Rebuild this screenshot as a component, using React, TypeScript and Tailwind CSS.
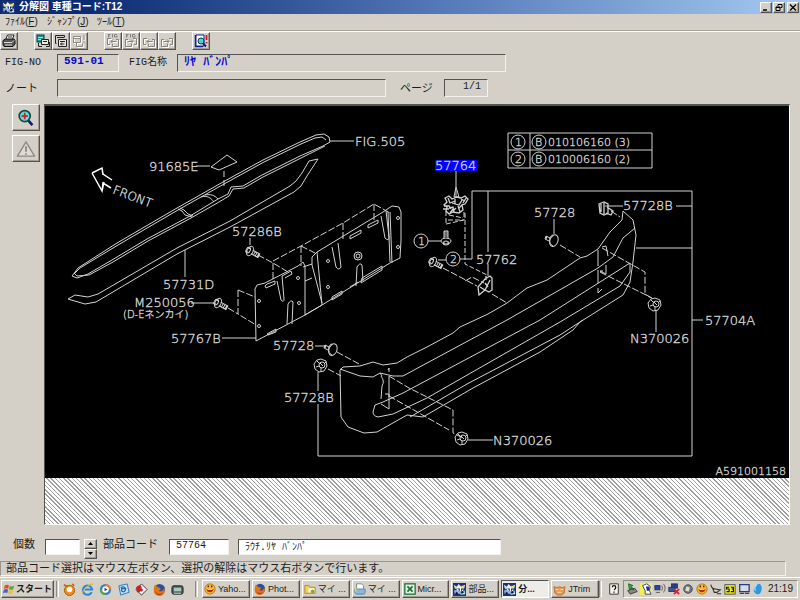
import type { ReactNode } from "react";

const ui = "font-['Liberation_Sans','Noto_Sans_CJK_JP',sans-serif]";
const mono = "font-['Liberation_Mono','Noto_Sans_CJK_JP',monospace]";
const raised =
  "border border-t-white border-l-white border-r-[#55534e] border-b-[#55534e] shadow-[inset_-1px_-1px_0_#a09c94]";
const sunken = "border border-t-[#6b6862] border-l-[#6b6862] border-r-[#f4f2ee] border-b-[#f4f2ee]";
const fieldBox = "border border-t-[#55534e] border-l-[#55534e] border-r-[#f4f2ee] border-b-[#f4f2ee] outline-none";

function Icon({ size = 14, children }: { size?: number; children: ReactNode }) {
  return (
    <svg width={size} height={size} viewBox="0 0 14 14" className="shrink-0" aria-hidden="true">
      {children}
    </svg>
  );
}

function CatalogIcon({ size = 12 }: { size?: number }) {
  return (
    <Icon size={size}>
      <rect width="14" height="14" fill="#1c2f78" />
      <path d="M1 2l3 2 2-3 3 3 4-2-1 4H2z" fill="#e9edf2" />
      <path d="M2 4h2v2H2zM9 3h3v2H9z" fill="#f0e23c" />
      <path d="M1 8l4-1 3 2 5-1v4l-4 1-3-2-4 1z" fill="#7fb3d8" />
      <path d="M4 6l2 2M8 5v4M11 7l-2 3M3 10l3 1M10 11h3" stroke="#fff" strokeWidth="1.2" />
      <circle cx="4" cy="11" r="1.3" fill="#101840" />
      <circle cx="10" cy="10" r="1.3" fill="#101840" />
    </Icon>
  );
}

/* ---------- toolbar ---------- */

function ToolButton({ label, disabled, children }: { label: string; disabled?: boolean; children: ReactNode }) {
  return (
    <button
      type="button"
      aria-label={label}
      disabled={disabled}
      className={`${raised} flex h-[18px] w-[18px] items-center justify-center bg-[#d4d0c8]`}
    >
      {children}
    </button>
  );
}

function PrinterIcon() {
  return (
    <Icon>
      <path d="M4 5l1.500-4H12l-1.500 4" fill="#fff" stroke="#222" />
      <path d="M1 6.500L3.500 5H12l1 1.500V10l-2 2.500H2L1 11z" fill="#555" stroke="#111" />
      <path d="M2 8.500h8l2-2M3 11h7" stroke="#ddd" fill="none" />
      <path d="M6 3h4" stroke="#222" />
    </Icon>
  );
}

function PagesIcon({ tone, kind }: { tone: string; kind: "teal" | "swap" | "jump" }) {
  return (
    <Icon>
      {kind === "teal" && (
        <>
          <rect x="1" y="1" width="7" height="7" fill="#1f9a90" stroke="#083c3c" />
          <path d="M2 3.500h5M2 5.500h3" stroke="#7ff0e0" />
          <path d="M5.500 5.500h7v5h-7z" fill="#ece9e2" stroke={tone} />
          <path d="M2.500 9v3.500H6M10 12.500h3.500V8M7 7.500h4" stroke={tone} fill="none" />
        </>
      )}
      {kind === "swap" && (
        <>
          <path d="M2.500 9.500h-1v-8h9v2" fill="none" stroke={tone} />
          <path d="M3 3.500h7" stroke={tone} />
          <path d="M4.500 5.500h8v7h-8z" fill="#ece9e2" stroke={tone} />
          <path d="M6 7.500h5M6.500 10h4M8 8.500L6.500 10 8 11.500" stroke={tone} fill="none" />
        </>
      )}
      {kind === "jump" && (
        <>
          <g stroke="#fff" fill="none" transform="translate(1 1)">
            <path d="M1.500 2.500h7v6h-7zM4.500 8.500v4h6v-3M12 1v5" />
          </g>
          <path d="M1.500 2.500h7v6h-7zM2 4.500h6M4.500 8.500v4h6v-3M12 1v5M12 7.500V9" fill="none" stroke={tone} />
        </>
      )}
    </Icon>
  );
}

function FigIcon({ back, fig }: { back: boolean; fig: boolean }) {
  const outline = back
    ? "M5 4.500H1.500v6H4M6.500 12.500h6v-7H10M6.500 12.500V10"
    : "M9 4.500h3.500v6H10M7.500 12.500h-6v-7H4M7.500 12.500V10";
  const arrow = back ? "M5 7.500h5.500M7 5.500l-2 2 2 2" : "M3.500 7.500H9M7 5.500l2 2-2 2";
  return (
    <Icon>
      <g stroke="#fff" fill="none" transform="translate(1 1)">
        <path d={outline} />
        <path d={arrow} />
      </g>
      <g stroke="#85827b" fill="none">
        {fig && <path d="M2.500 0v3.500M2.500.5h2M2.500 2h1.500M6.500 0v3.500M11 .5H8.500V3H11V1.500" />}
        <path d={outline} />
        <path d={arrow} />
      </g>
    </Icon>
  );
}

function SearchPageIcon() {
  return (
    <Icon>
      <path d="M1.500 1v11.500H9" stroke="#10209a" strokeWidth="1.500" fill="none" />
      <path d="M2 1h8v11H2z" fill="#fff" stroke="#10209a" />
      <circle cx="7" cy="7" r="3" fill="#48d6d6" stroke="#0a3a5a" />
      <path d="M9 9.500l3 3" stroke="#0a1a70" strokeWidth="2" />
      <path d="M12.500 1v5M12.500 8v1.500" stroke="#e01818" strokeWidth="1.800" />
    </Icon>
  );
}

/* ---------- exploded diagram ---------- */

const labelSizes = { base: "text-[13px]", small: "text-[11px]", note: "text-[10px]" };

function Label({
  x,
  y,
  children,
  size = "base",
  end,
}: {
  x: number;
  y: number;
  children: ReactNode;
  size?: "base" | "small" | "note";
  end?: boolean;
}) {
  return (
    <text
      x={x}
      y={y}
      textAnchor={end ? "end" : "start"}
      fill="#fff"
      stroke="#c8c8c8"
      strokeWidth="0.3"
      className={labelSizes[size]}
    >
      {children}
    </text>
  );
}

function Bolt({ x, y, angle }: { x: number; y: number; angle: number }) {
  return (
    <g transform={`translate(${x} ${y}) rotate(${angle})`}>
      <ellipse cx="0" cy="0" rx="3" ry="5" />
      <ellipse cx="-2" cy="0" rx="2" ry="3" />
      <path d="M-4-2h3M-4 2h3M2-2h8v4H2M5-2v4M7-2v4M9-2v4" />
    </g>
  );
}

function Clip({ x, y }: { x: number; y: number }) {
  return (
    <g transform={`translate(${x} ${y})`}>
      <ellipse cx="2" cy="0" rx="4" ry="6" transform="rotate(20)" />
      <path d="M1-5c-4 0-5 9 0 11M-2-2l-4-2-1 3 4 2M-5-4l-1 3" />
    </g>
  );
}

function Nut({ x, y }: { x: number; y: number }) {
  return (
    <g transform={`translate(${x} ${y})`}>
      <path d="M-4-5l4-1 5 2 1 5-3 5-5 1-4-3-1-5z" />
      <circle cx="1" cy="0" r="3" />
      <path d="M-4-4l3 3M-5 2l3-1M0 6V3M5-3L3-1M-1-2l3 3" />
    </g>
  );
}

function Diagram() {
  return (
    <svg
      viewBox="45 106 744 372"
      role="img"
      aria-label="FIG 591-01"
      fill="none"
      stroke="#d2d2d2"
      strokeWidth="1"
      className="block w-full bg-black font-['DejaVu_Sans','Noto_Sans_CJK_JP',sans-serif] font-extralight"
    >
      {/* front arrow */}
      <path d="M92 173l10-5 1 6 9 6M92 173l10 18 1-8 8 5M102 168l1 7M102 191l2-9" stroke="#fff" strokeWidth="1.500" />
      <text
        transform="translate(112 193) rotate(21)"
        fill="#fff"
        stroke="#c8c8c8"
        strokeWidth="0.3"
        className="text-[12px]"
      >
        FRONT
      </text>

      {/* beam FIG.505 */}
      <path d="M72 276l6-8 39-25 60-35 46-26 40-22 37-18 16-7 8-1 5 3 1 5-7 4-23 10-38 19-19 11-12 1-3 7-10 5-28 17-43 23-35 21-24 14-11 4z" />
      <path d="M74 274l6-6 38-23 60-35 46-26 40-22 37-18 14-6 7-1 4 3M325 146l-24 12-38 19-19 11-11 1-4 7-10 6-28 16-43 23-35 21-24 13-12 1-3-3" />
      <path d="M178 209l4 2 3 4 7 2M180 208l4 2 4 4 5 2M201 197c6-2 10 1 13 5M205 195c6-1 9 0 13 4" />
      <path d="M330 141h24" />
      <Label x={355} y={146}>FIG.505</Label>

      {/* lower strip */}
      <path d="M68 299l7-4 13 2 10-3 79-46 53-27 60-35 6-5 6-8 7-12 9-2-11 17-6 10-7 6-64 35-53 27-81 48-11 2z" />
      <path d="M185 250v27" />
      <Label x={163} y={289}>57731D</Label>

      {/* caution plate */}
      <path d="M196 166h14M211 167l16-12 10 7-18 8z" />
      <path d="M224 171v18" strokeDasharray="6 3" />
      <Label x={149} y={171}>91685E</Label>

      {/* bracket plate */}
      <path d="M256 341l-1-52 2-4 8-2 33-17 5-4 2 4v49zM303 267l9-3M305 281l7-3M305 315l17-10 68-42 10-5 1-18v-28l-2-5-7-1-9 6-66 40-5 5v8l10 38M317 252l5 53M305 315l17-10M390 212l2 51M388 212l2 50" />
      <path d="M277 281l4 19q3 3 3-1l-2-23M287 324l1-20q3-5 5-2l-1 22M332 247l4 20q3 4 5 0l-3-24M356 286l1-19q3-5 5-2l1 16M381 216l4 22q4 4 4-1l-3-26" />
      <path d="M265 286l2-2 8-3v3l-9 4zM282 276l9-5 1 3-7 4M267 334l9-5v3l-8 3zM350 236l11-6v3l-11 6zM368 225l10-5v3l-10 5zM332 297l10-6v3l-10 6zM350 287l8-5M362 278l20-12v4l-21 13z" />
      <g>
        <circle cx="259" cy="301" r="1.500" />
        <circle cx="259" cy="326" r="1.500" />
        <circle cx="298" cy="278" r="1.500" />
        <circle cx="299" cy="303" r="1.500" />
        <circle cx="328" cy="261" r="1.500" />
        <circle cx="328" cy="287" r="1.500" />
        <circle cx="398" cy="218" r="1.500" />
        <circle cx="398" cy="247" r="1.500" />
        <circle cx="358" cy="256" r="4" />
        <circle cx="358" cy="256" r="2" />
      </g>
      <path
        d="M258 255l15 8 15 9M273 263v16M273 261l28-15 42-23 31-19 16 9M301 246v20M301 246l16 8M343 223v16M374 204v18M238 290v24l18 11M238 290l17 7M228 308l10 6"
        strokeDasharray="7 2"
      />
      <Bolt x={250} y={251} angle={28} />
      <path d="M250 238v7" />
      <Label x={232} y={236}>57286B</Label>
      <Bolt x={218} y={303} angle={28} />
      <path d="M191 303h23" />
      <Label x={134} y={307}>M250056</Label>
      <Label x={123} y={318} size="note">(D-Eネンカイ)</Label>
      <path d="M222 338h34" />
      <Label x={171} y={343}>57767B</Label>

      {/* bolt table */}
      <path d="M508 133h144v35H508zM508 150h144M530 133v35" />
      <circle cx="518" cy="142" r="7" />
      <circle cx="518" cy="159" r="7" />
      <circle cx="539" cy="142" r="7" />
      <circle cx="539" cy="159" r="7" />
      <Label x={515} y={146} size="small">1</Label>
      <Label x={515} y={163} size="small">2</Label>
      <Label x={535} y={146} size="small">B</Label>
      <Label x={535} y={163} size="small">B</Label>
      <Label x={548} y={146} size="small">010106160 (3)</Label>
      <Label x={548} y={163} size="small">010006160 (2)</Label>

      {/* lamp 57764 */}
      <rect x="435" y="160" width="42" height="11" fill="#0000ff" stroke="none" />
      <Label x={435} y={170}>57764</Label>
      <path d="M456 171v16M456 187l-2 10h5zM456 190v8" />
      <path
        strokeWidth="1.300"
        d="M445 198l4-2 3 3 5-2 4 1 4-2 3 3-3 5-3 1 1 5-4 3-6-1-4 2-3-3 1-4-3-2 3-3zM448 198l2 5 5-2M452 203l7 2 3-5M449 208l4-1 1 5M458 206l2 6M455 199v5M461 199l4 2M444 206h5l2 3M443 209h6M456 208l-3 3M463 204l-4 4M450 213l3-4M466 198l-3 5"
      />
      <path d="M446 211v13M464 212v8M446 224l18-4M449 215l14 3M465 213v51l22 11M448 220h15" strokeDasharray="5 2" />
      <Bolt x={446} y={241} angle={-90} />
      <circle cx="421" cy="241" r="7" />
      <Label x={418} y={245} size="small">1</Label>
      <path d="M428 241h13" />
      <Bolt x={433} y={262} angle={28} />
      <circle cx="453" cy="259" r="7" />
      <Label x={450} y={263} size="small">2</Label>
      <path d="M438 260h8M460 259h12V191M488 191v61M488 264v12" />
      <Label x={476} y={264}>57762</Label>
      <path d="M443 268l34 18M465 281l7-4 12 6M492 294l15 9" strokeDasharray="7 2" />
      <path d="M478 287l7-8 5-3 2 2v12l-3 2-4-2-6 5zM480 287l5 3 5-10M485 283l3 4M486 276v4" strokeWidth="1.300" />

      {/* frame */}
      <path d="M318 372v19M318 404v52h374V191H472M636 248h56M676 206h16M692 320h11" />
      <Label x={705} y={325}>57704A</Label>

      {/* bumper */}
      <path d="M340 370l3-3 17-1 13-4 10 3 14-2 10-6 20-10 26-14 7-6 13-6 15-7 19-11 20-15 20-8 33-22 7-2 11-7 12-17 12-12 1-9 10 9 3 15-3 27-3 20-7 13-43 27-7 8-33 22-67 36-50 29-16-2-30 17-13 1-16-6-7-10z" />
      <path d="M340 369l20 7 13 1 7-4 13 3h10l24-13 80-43 91-52 15-11 10-19 12-10" />
      <path d="M373 412l2-7 8-3 20-9 137-73 90-57v9l-10 14-60 36-133 76-34 16-15 3q-5-1-5-5" />
      <path d="M410 417l57-33 93-49 23-15" />
      <path d="M380 373l2 3M388 370l1-2v4M389 376v33l-8-5M381 376q4 5 1 10l-1 13M385 394h4v3M602 247l4-1 2 10M598 250v16M598 270v13M598 288v5l4-4M606 265v9l-6-3M600 271h3" />
      <path
        d="M560 245l20 12M337 352l24 13M328 369l13 7M389 376l20 12 44 22v23l10 5M389 396l60 34M611 211l9 6M602 248l43 24v22l8 5M600 272l52 26"
        strokeDasharray="7 2"
      />

      <Clip x={331} y={349} />
      <path d="M315 346h10" />
      <Label x={273} y={350}>57728</Label>
      <Nut x={321} y={365} />
      <Label x={284} y={402}>57728B</Label>
      <Nut x={462} y={438} />
      <path d="M468 440h25" />
      <Label x={493} y={445}>N370026</Label>
      <Clip x={552} y={240} />
      <path d="M554 219v15" />
      <Label x={534} y={217}>57728</Label>
      <path d="M599 204l5-2 4 2v9l-4 2-4-2zM601 204v8M604 203v11M607 207l6 4-2 4-5-2" strokeWidth="1.300" />
      <path d="M605 206h18" />
      <Label x={623} y={210}>57728B</Label>
      <Nut x={655} y={304} />
      <path d="M656 310v22" />
      <Label x={630} y={343}>N370026</Label>
      <Label x={786} y={475} size="small" end>A591001158</Label>
    </svg>
  );
}

/* ---------- task bar ---------- */

function FirefoxIcon({ size = 13 }: { size?: number }) {
  return (
    <Icon size={size}>
      <circle cx="7" cy="7" r="6" fill="#2a4f9c" />
      <path d="M2 2c3 1 2 3 5 3 2 1 1 3-1 3 2 2 5 1 6-3 2 5-1 9-5 9S0 11 1 6z" fill="#e07418" />
      <path d="M2 8c1 4 6 5 9 2-2 4-8 4-9-2z" fill="#a83410" />
    </Icon>
  );
}

function FolderIcon() {
  return (
    <Icon size={12}>
      <path d="M1 3h5l1 2h6v7H1z" fill="#f3d158" stroke="#a88820" />
      <path d="M5 6h7v5H5z" fill="#f9f3c8" />
      <circle cx="10" cy="10" r="2" fill="#6aa85a" />
    </Icon>
  );
}

function FaceIcon() {
  return (
    <Icon size={12}>
      <circle cx="7" cy="7" r="6" fill="#f8b828" stroke="#b8701c" />
      <path d="M3 7h8c0 5-8 5-8 0z" fill="#c02818" />
      <path d="M4 7.500h6" stroke="#fff" />
      <path d="M5 3v2M9 3v2" stroke="#402008" strokeWidth="1.500" />
    </Icon>
  );
}

const quickLaunch: { label: string; art: ReactNode }[] = [
  {
    label: "Player",
    art: (
      <Icon size={13}>
        <circle cx="7" cy="8" r="5.500" fill="#f08c1c" stroke="#a85808" />
        <circle cx="7" cy="7" r="3" fill="#fff" />
        <path d="M1 2l4 2M10 1l2 2" stroke="#c06810" strokeWidth="2" />
      </Icon>
    ),
  },
  {
    label: "Internet Explorer",
    art: (
      <Icon size={13}>
        <path d="M11.500 10A5 5 0 1 1 12 7H4" fill="none" stroke="#2a86d8" strokeWidth="2.200" />
        <path d="M1 12C2 7 8 1 13 1" stroke="#e8b428" strokeWidth="1.200" fill="none" />
      </Icon>
    ),
  },
  {
    label: "Media Player",
    art: (
      <Icon size={13}>
        <circle cx="7" cy="7" r="6" fill="#3c78c8" />
        <path d="M7 1a6 6 0 0 1 6 6H7z" fill="#e88420" />
        <path d="M1 7a6 6 0 0 0 6 6V7z" fill="#50a848" />
        <circle cx="7" cy="7" r="3.500" fill="#fff" />
        <path d="M6 5l3 2-3 2z" fill="#203878" />
      </Icon>
    ),
  },
  {
    label: "Outlook",
    art: (
      <Icon size={13}>
        <path d="M2 3l9-2 2 9-9 3z" fill="#bfe2f6" stroke="#2874b8" />
        <path d="M4 5c3-2 6 0 5 3-2 3-5 1-4-2h5" stroke="#1c68b0" fill="none" strokeWidth="1.300" />
      </Icon>
    ),
  },
  {
    label: "Card",
    art: (
      <Icon size={13}>
        <path d="M7 1l6 6-6 6-6-6z" fill="#f4f4f0" stroke="#333" />
        <path d="M1 5c4-5 7-2 6 1 3 1 1 4-1 3-2 2-5 1-4-1z" fill="#c8202c" />
      </Icon>
    ),
  },
  { label: "Firefox", art: <FirefoxIcon /> },
  {
    label: "Desktop",
    art: (
      <Icon size={13}>
        <rect x="1" y="3" width="12" height="9" rx="2" fill="#4c5a58" stroke="#222" />
        <rect x="3" y="5" width="8" height="4" fill="#a8c8bc" />
        <path d="M3 11h8" stroke="#ddd" />
      </Icon>
    ),
  },
];

const tasks: { label: string; art: ReactNode; active?: boolean }[] = [
  { label: "Yaho...", art: <FaceIcon /> },
  { label: "Phot...", art: <FirefoxIcon size={12} /> },
  { label: "マイ ...", art: <FolderIcon /> },
  {
    label: "マイ ...",
    art: (
      <Icon size={12}>
        <path d="M3 1h6l2 2v5H3z" fill="#fff" stroke="#688" />
        <path d="M1 7h12v4q0 2-2 2H3q-2 0-2-2z" fill="#8cb8e0" stroke="#5080a8" />
        <path d="M1 6v4h2V6z" fill="#f0cc50" />
      </Icon>
    ),
  },
  {
    label: "Micr...",
    art: (
      <Icon size={12}>
        <rect x="1" y="1" width="12" height="12" fill="#e4f0e4" stroke="#1c7038" strokeWidth="1.500" />
        <path d="M4 4l6 6M10 4l-6 6" stroke="#1c7038" strokeWidth="2" />
      </Icon>
    ),
  },
  { label: "部品...", art: <CatalogIcon size={13} /> },
  { label: "分...", art: <CatalogIcon size={13} />, active: true },
  {
    label: "JTrim",
    art: (
      <Icon size={13}>
        <path d="M1 4l3 1 3-1 3 1 3-1-1 7-3 2H5l-3-2z" fill="#e09a58" stroke="#b87038" />
        <path d="M3 7h3M8 7h3M5 10h4" stroke="#fbe0b8" />
      </Icon>
    ),
  },
];

const tray: ReactNode[] = [
  <Icon size={12} key="usb">
    <path d="M2 9l8-3 3 4-8 3z" fill="#888" stroke="#333" />
    <path d="M3 1l5 2-2 1 3 4-4-2-1 2z" fill="#30b840" stroke="#106018" />
  </Icon>,
  <Icon size={12} key="dog">
    <rect width="14" height="14" fill="#f4ee58" />
    <path d="M3 3l5-2 4 3-1 5 2 4H6V9z" fill="#fff" stroke="#20308c" />
    <path d="M7 4h4v5H8z" fill="#1c2c90" />
  </Icon>,
  <Icon size={12} key="wave">
    <rect x="1" y="3" width="6" height="5" fill="#2848a0" stroke="#333" />
    <path d="M2 11h5M9 3q2 3 0 6M11 1q4 5 0 10" stroke="#555" fill="none" />
  </Icon>,
  <Icon size={12} key="net">
    <rect x="4" y="1" width="7" height="5" fill="#28409c" stroke="#333" />
    <rect x="1" y="5" width="7" height="5" fill="#3858b0" stroke="#333" />
    <path d="M7 7l6 6M13 7l-6 6" stroke="#d81c28" strokeWidth="2" />
  </Icon>,
  <Icon size={12} key="vol">
    <circle cx="7" cy="7" r="5" fill="#777" stroke="#444" />
    <path d="M5 4l4 1-1 5-4-1z" fill="#ddd" />
  </Icon>,
  <FaceIcon key="face" />,
  <Icon size={12} key="pen">
    <path d="M1 2q1 5 5 5l6 1-4 3H5L3 6M8 12.500h5" stroke="#333" strokeWidth="1.300" fill="none" />
  </Icon>,
  <Icon size={12} key="calendar">
    <rect x="1" y="2" width="12" height="11" fill="#f0f028" stroke="#444" />
    <path d="M6 5H3v2h3v3H3M8 5h3v5H8M9 7h2" stroke="#111" fill="none" strokeWidth="1.300" />
  </Icon>,
  <Icon size={12} key="screen">
    <path d="M2 2h11v8H2z" fill="#d4dce8" stroke="#283c80" strokeWidth="1.500" />
    <path d="M2 12h5M8 12h5" stroke="#444" strokeWidth="1.500" />
  </Icon>,
  <Icon size={12} key="drop">
    <path d="M7 1c4 0 5 4 4 8-1 3-3 5-5 4-4-1-5-5-3-8z" fill="#2c98e0" />
    <path d="M6 2c-3 2-3 5-2 7" stroke="#a8e0ff" strokeWidth="1.500" fill="none" />
  </Icon>,
];

function Divider() {
  return <span className="h-4 w-[3px] shrink-0 border-x border-l-[#8e8b84] border-r-white" />;
}

export default function App() {
  return (
    <div className={`${ui} flex min-h-screen flex-col bg-[#d4d0c8] text-[11px] leading-none text-[#1c1c1c]`}>
      <header className="flex h-[14px] items-center gap-1 bg-linear-to-r from-[#0c2a70] from-10% via-[#5578b8] via-55% to-[#a6caf0] pr-px pl-[2px] text-white">
        <CatalogIcon size={13} />
        <h1 className="flex-1 text-[10px] font-bold whitespace-nowrap">分解図 車種コード:T12</h1>
        <div className="flex gap-px">
          <button type="button" aria-label="Minimize" className={`${raised} h-[11px] w-[12px] bg-[#d4d0c8]`}>
            <svg viewBox="0 0 10 9" className="block h-[9px] w-[10px]"><path d="M2 7h4" stroke="#000" strokeWidth="1.500" /></svg>
          </button>
          <button type="button" aria-label="Restore" className={`${raised} h-[11px] w-[12px] bg-[#d4d0c8]`}>
            <svg viewBox="0 0 10 9" className="block h-[9px] w-[10px]"><path d="M4 3V1.500h4v3H6.500M2 4h4v3.500H2zM2 4.500h4" fill="none" stroke="#000" /></svg>
          </button>
          <button type="button" aria-label="Close" className={`${raised} ml-px h-[11px] w-[12px] bg-[#d4d0c8]`}>
            <svg viewBox="0 0 10 9" className="block h-[9px] w-[10px]"><path d="M2 1.500l6 6M8 1.500l-6 6" stroke="#000" strokeWidth="1.300" /></svg>
          </button>
        </div>
      </header>

      <nav className="flex h-[17px] items-center gap-2 border-b border-[#aaa69e] pl-[5px] text-[10px] whitespace-nowrap shadow-[0_1px_0_#fff]">
        <button type="button" className="w-[34px] text-left">ﾌｧｲﾙ(<u>F</u>)</button>
        <button type="button" className="w-[42px] text-left">ｼﾞｬﾝﾌﾟ(<u>J</u>)</button>
        <button type="button" className="text-left">ﾂｰﾙ(<u>T</u>)</button>
      </nav>

      <div role="toolbar" className="mt-px flex gap-4">
        <ToolButton label="印刷"><PrinterIcon /></ToolButton>
        <div className="flex">
          <ToolButton label="一覧"><PagesIcon tone="#222" kind="teal" /></ToolButton>
          <ToolButton label="切替"><PagesIcon tone="#222" kind="swap" /></ToolButton>
          <ToolButton label="ジャンプ" disabled><PagesIcon tone="#8e8b84" kind="jump" /></ToolButton>
        </div>
        <div className="flex">
          <ToolButton label="前のFIG" disabled><FigIcon back fig /></ToolButton>
          <ToolButton label="次のFIG" disabled><FigIcon back={false} fig /></ToolButton>
          <ToolButton label="前のページ" disabled><FigIcon back fig={false} /></ToolButton>
          <ToolButton label="次のページ" disabled><FigIcon back={false} fig={false} /></ToolButton>
        </div>
        <ToolButton label="検索"><SearchPageIcon /></ToolButton>
      </div>

      <div className="mt-1 flex items-center pl-[5px]">
        <label htmlFor="figno" className={`${mono} w-[52px] text-[10px]`}>FIG-NO</label>
        <input id="figno" readOnly defaultValue="591-01" className={`${fieldBox} ${mono} h-[18px] w-[62px] bg-transparent px-[6px] pb-1 text-[11px] font-bold text-[#0808c8]`} />
        <label htmlFor="figname" className={`${mono} ml-[10px] w-12 text-[10px]`}>FIG名称</label>
        <input id="figname" readOnly defaultValue="ﾘﾔ ﾊﾞﾝﾊﾟ" className={`${fieldBox} ${mono} h-[18px] w-[329px] bg-transparent px-[6px] pb-1 text-[12px] font-bold text-[#0808c8]`} />
      </div>

      <div className="mt-[7px] mb-[7px] flex items-center pl-[5px]">
        <label htmlFor="note" className="w-[52px]">ノート</label>
        <input id="note" readOnly className={`${fieldBox} h-[18px] w-[329px] bg-transparent px-1`} />
        <label htmlFor="page" className="ml-[14px] w-11">ページ</label>
        <input id="page" readOnly defaultValue="1/1" className={`${fieldBox} ${mono} h-[18px] w-11 bg-transparent pr-[6px] pb-1 text-right text-[10px]`} />
      </div>

      <main className="flex flex-1 pr-[10px]">
        <aside className="flex w-11 flex-col items-end gap-1 pr-1">
          <button type="button" aria-label="拡大" className={`${raised} flex h-[27px] w-7 items-center justify-center`}>
            <Icon size={18}>
              <path d="M8 8l4 4.500" stroke="#181860" strokeWidth="2" />
              <circle cx="6" cy="5.500" r="4.300" fill="#5fdcdc" stroke="#164848" strokeWidth="1.300" />
              <path d="M6 3v5M3.500 5.500h5" stroke="#d02020" strokeWidth="1.300" />
            </Icon>
          </button>
          <button type="button" aria-label="注意" disabled className={`${raised} flex h-[27px] w-7 items-center justify-center`}>
            <Icon size={20}>
              <path d="M7 2l6 10H1z" fill="#dedbd4" stroke="#8e8b84" strokeLinejoin="round" />
              <path d="M7 5v4M7 10v1" stroke="#8e8b84" strokeWidth="1.300" />
            </Icon>
          </button>
        </aside>
        <section className="flex-1 border border-t-2 border-t-[#55534e] border-r-white border-b-white border-l-[#55534e] bg-white bg-[repeating-linear-gradient(45deg,#a0a0a0_0_1px,transparent_1px_3px)]">
          <Diagram />
        </section>
      </main>

      <div className="flex h-9 items-center pb-px pl-[13px]">
        <label htmlFor="qty" className="mt-1 w-8">個数</label>
        <input id="qty" className={`${fieldBox} mt-2 h-4 w-[35px] bg-white px-1`} />
        <div className="mt-3 ml-1 flex flex-col">
          <button type="button" aria-label="増やす" className={`${raised} flex h-[10px] w-[13px] items-center justify-center`}>
            <svg width="5" height="3" viewBox="0 0 5 3"><path d="M0 3h5L2.500 0z" /></svg>
          </button>
          <button type="button" aria-label="減らす" className={`${raised} flex h-[10px] w-[13px] items-center justify-center`}>
            <svg width="5" height="3" viewBox="0 0 5 3"><path d="M0 0h5L2.500 3z" /></svg>
          </button>
        </div>
        <label htmlFor="part" className="mt-1 ml-[6px] w-[66px]">部品コード</label>
        <input id="part" defaultValue="57764" className={`${fieldBox} ${mono} mt-2 h-4 w-[60px] bg-white px-[6px] pb-[2px] text-[10px]`} />
        <input aria-label="部品名" defaultValue="ﾗｳﾁ.ﾘﾔ ﾊﾞﾝﾊﾟ" className={`${fieldBox} ${mono} mt-2 ml-[9px] h-4 w-[263px] bg-white px-[6px] pb-[2px] text-[10px]`} />
      </div>

      <p role="status" className={`${sunken} mr-[14px] flex h-[15px] items-center border-t-[#9a978f] border-l-[#9a978f] pl-[5px]`}>
        部品コード選択はマウス左ボタン、選択の解除はマウス右ボタンで行います。
      </p>

      <footer className="mt-px flex h-[23px] items-center border-t border-white pr-[2px] pl-px text-[10px]">
        <button type="button" className={`${raised} flex h-[18px] w-[53px] items-center gap-px pl-px font-bold whitespace-nowrap`}>
          <Icon size={12}>
            <path d="M2 3q3-2 5 0L6 7Q4 5 1 7z" fill="#e05028" />
            <path d="M8 3q2 2 5 0l-1 4q-3 2-5 0z" fill="#58a838" />
            <path d="M1 8q3-2 5 0l-1 4q-2-2-5 0z" fill="#3868d0" />
            <path d="M7 8q2 2 5 0l-1 4q-3 2-5 0z" fill="#f0c028" />
          </Icon>
          <span className="text-[9px]">スタート</span>
        </button>
        <span className="ml-[2px] flex"><Divider /></span>
        <div className="ml-1 flex gap-[5px]">
          {quickLaunch.map((q) => (
            <button key={q.label} type="button" aria-label={q.label}>{q.art}</button>
          ))}
        </div>
        <span className="ml-[11px] flex"><Divider /></span>
        <div className="ml-1 flex min-w-0 flex-1 gap-[2px]">
          {tasks.map((t, i) => (
            <button
              key={i}
              type="button"
              className={`flex h-[18px] w-12 items-center gap-[2px] pl-px text-[9px] whitespace-nowrap ${
                t.active
                  ? "border border-t-[#55534e] border-r-white border-b-white border-l-[#55534e] bg-[#eeece8] font-bold"
                  : raised
              }`}
            >
              {t.art}
              <span>{t.label}</span>
            </button>
          ))}
        </div>
        <Divider />
        <button type="button" aria-label="ヘルプ" className="ml-[6px]">
          <Icon size={12}>
            <path d="M2 1h10v12H2z" fill="#f6f4ee" stroke="#222" />
            <path d="M5 5q0-2 2-2t2 2-2 3M7 10v1.500" stroke="#111" strokeWidth="1.500" fill="none" />
          </Icon>
        </button>
        <div className="ml-[3px] flex h-[18px] items-center gap-[2px] border border-t-[#8e8b84] border-r-white border-b-white border-l-[#8e8b84] pr-1 pl-[2px]">
          {tray}
          <time className="pl-[2px] text-[10px]">21:19</time>
        </div>
      </footer>
    </div>
  );
}
